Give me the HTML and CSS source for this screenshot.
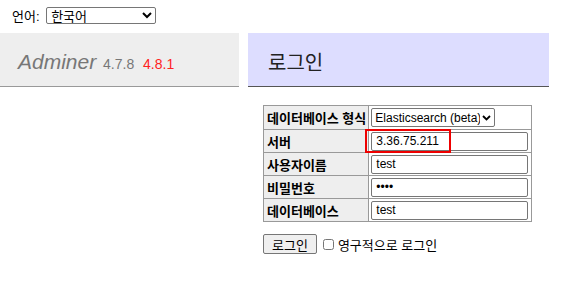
FILE: index.html
```html
<!DOCTYPE html>
<html lang="ko">

<head>
    <meta charset="UTF-8">
    <title>로그인 - Adminer</title>
    <link rel="stylesheet" href="styles.css">
</head>

<body>
    <!-- Idioma -->
    <div class="idioma">
        <label>언어: <select class="sel-idioma">
                <option>한국어</option>
            </select></label>
    </div>

    <div class="pagina">
        <!-- Menu -->
        <div class="menu">
            <h1><span class="marca">Adminer</span> <span class="versao">4.7.8</span> <span class="nova">4.8.1</span></h1>
        </div>

        <!-- Conteúdo -->
        <div class="conteudo">
            <h2>로그인</h2>

            <form class="form-login">
                <table class="tabela">
                    <tr class="primeira">
                        <th>데이터베이스 형식</th>
                        <td><span class="caixa-driver"><select class="sel-driver">
                                    <option>Elasticsearch (beta)</option>
                                </select><svg class="seta" width="9" height="6" viewBox="0 0 9 6">
                                    <path d="M1 1l3.5 3.5L8 1" fill="none" stroke="#000" stroke-width="1.8" />
                                </svg></span></td>
                    </tr>
                    <tr>
                        <th>서버</th>
                        <td class="marcado"><input type="text" value="3.36.75.211"><span class="destaque"></span></td>
                    </tr>
                    <tr>
                        <th>사용자이름</th>
                        <td><input type="text" value="test"></td>
                    </tr>
                    <tr>
                        <th>비밀번호</th>
                        <td><input type="password" value="test"></td>
                    </tr>
                    <tr>
                        <th>데이터베이스</th>
                        <td><input type="text" value="test"></td>
                    </tr>
                </table>

                <div class="acoes">
                    <button type="button" class="botao">로그인</button>
                    <label class="lembrar"><input type="checkbox"> 영구적으로 로그인</label>
                </div>
            </form>
        </div>
    </div>
</body>

</html>
```

FILE: styles.css
```css
/* Configuração geral */
body {
    margin: 0;
    font-family: 'Liberation Sans', 'Noto Sans CJK KR', sans-serif;
    font-size: 13px;
    color: #000;
    background: #fff;
}

select,
input,
button {
    font-family: 'Liberation Sans', 'Noto Sans CJK KR', sans-serif;
    font-size: 12px;
}

/* Idioma */
.idioma {
    height: 27px;
    padding: 6px 0 0 12px;
    box-sizing: border-box;
}

.sel-idioma {
    width: 110px;
    height: 17px;
    padding: 0;
    margin: 0 0 0 3px;
    border: 1px solid #767676;
    border-radius: 2px;
    background: #fff;
    font-size: 13px;
}

.pagina {
    display: flex;
    align-items: flex-start;
    margin-top: 6px;
}

/* Menu */
.menu {
    width: 239px;
    height: 54px;
    background: #eee;
    border-bottom: 1px solid #999;
    box-sizing: border-box;
}

.menu h1 {
    margin: 0;
    padding: 17px 0 0 18px;
    font-weight: normal;
    font-size: 21px;
    color: #777;
}

.marca {
    font-style: italic;
}

.versao {
    font-size: 14px;
    margin-left: 1px;
}

.nova {
    font-size: 14px;
    color: #f22;
    margin-left: 3px;
}

/* Conteúdo */
.conteudo {
    margin-left: 9px;
    width: 301px;
}

.conteudo h2 {
    margin: 0;
    height: 54px;
    padding: 14px 0 0 20px;
    box-sizing: border-box;
    background: #ddf;
    border-bottom: 1px solid #555;
    font-size: 20px;
    font-weight: normal;
    color: #222;
}

.form-login {
    margin: 18px 0 0 15px;
}

.tabela {
    border-collapse: collapse;
    width: 269px;
}

.tabela th,
.tabela td {
    border: 1px solid #999;
    padding: 1px 2px;
    height: 23px;
    box-sizing: border-box;
}

.tabela .primeira th,
.tabela .primeira td {
    height: 24px;
}

.tabela th {
    background: #eee;
    text-align: left;
    font-weight: bold;
    white-space: nowrap;
    width: 105px;
    padding-left: 3px;
}

.tabela input {
    width: 157px;
    height: 19px;
    margin: 0;
    padding: 0 4px;
    border: 1px solid #767676;
    border-radius: 2px;
    box-sizing: border-box;
}

/* Seletor de driver */
.caixa-driver {
    position: relative;
    display: inline-block;
    vertical-align: middle;
}

.sel-driver {
    appearance: none;
    display: block;
    width: 124px;
    height: 19px;
    margin: 0;
    padding: 0 14px 0 3px;
    border: 1px solid #767676;
    border-radius: 2px;
    background: #fff;
    color: #000;
    font-size: 12px;
}

.seta {
    position: absolute;
    right: 4px;
    top: 7px;
    pointer-events: none;
}

/* Destaque vermelho */
.marcado {
    position: relative;
}

.destaque {
    position: absolute;
    left: -4px;
    top: -1px;
    width: 86px;
    height: 24px;
    border: 2px solid #e00;
    box-sizing: border-box;
}

/* Ações */
.acoes {
    display: flex;
    align-items: center;
    margin-top: 12px;
}

.botao {
    height: 20px;
    padding: 0 8px;
    margin: 0;
    border: 1px solid #767676;
    border-radius: 2px;
    background: #efefef;
    font-size: 13px;
}

.lembrar {
    display: flex;
    align-items: center;
    margin-left: 4px;
}

.lembrar input {
    width: 11px;
    height: 11px;
    margin: 0 4px 0 2px;
}
```
